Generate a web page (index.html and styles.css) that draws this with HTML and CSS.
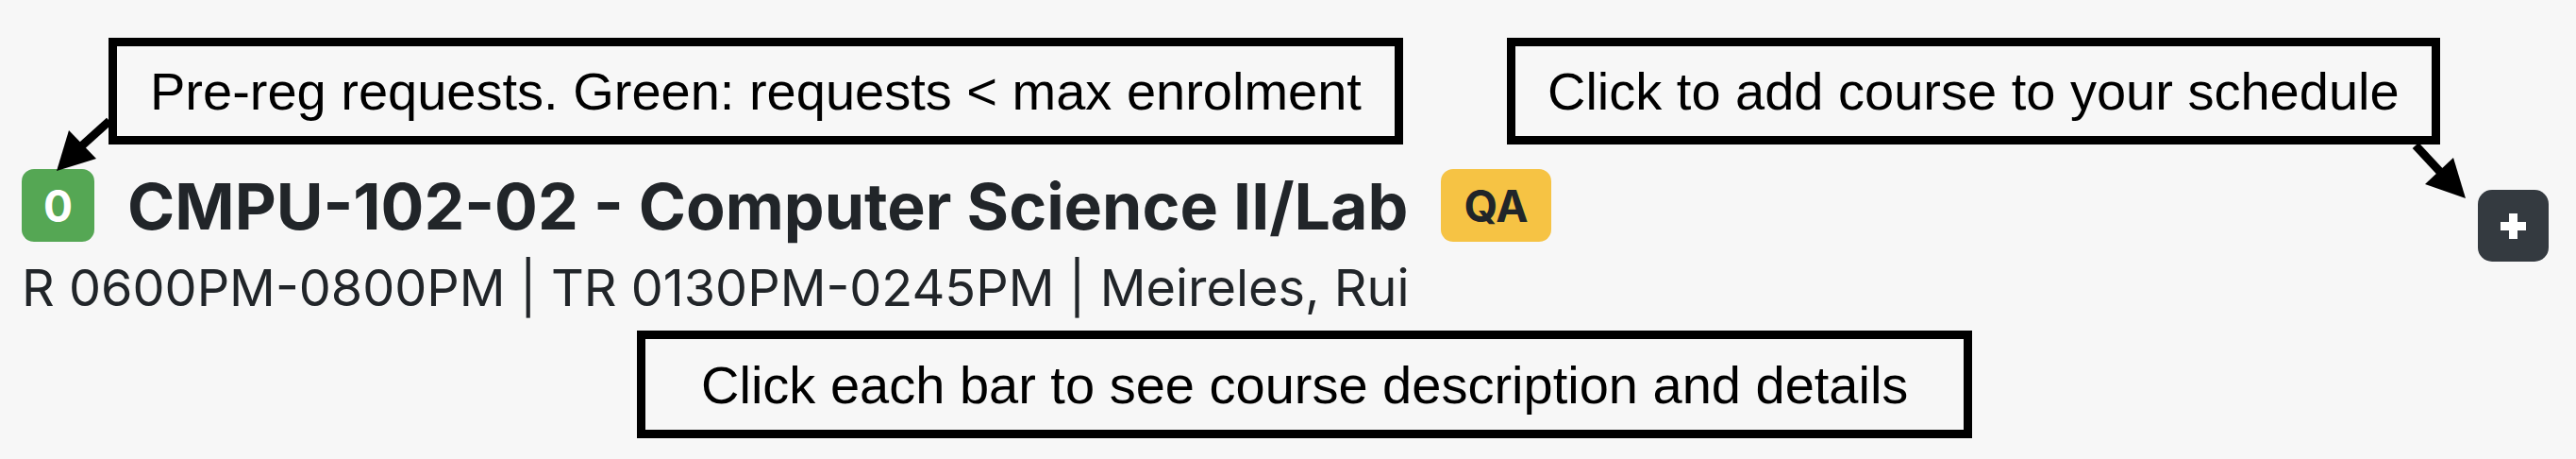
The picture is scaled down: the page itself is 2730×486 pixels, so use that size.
FILE: index.html
```html
<!DOCTYPE html>
<html lang="en">
<head>
<meta charset="utf-8">
<title>Course listing help</title>
<link rel="stylesheet" href="styles.css">
</head>
<body>
<div class="page">
  <div class="notes notes-top">
    <div class="note note-req">Pre-reg requests. Green: requests &lt; max enrolment</div>
    <div class="note note-add">Click to add course to your schedule</div>
  </div>

  <div class="course">
    <div class="course-info">
      <div class="course-title">
        <span class="badge badge-req">0</span>
        <h5 class="title">CMPU-102-02 - Computer Science II/Lab</h5>
        <span class="badge badge-qa">QA</span>
      </div>
      <div class="course-meta">R 0600PM-0800PM | TR 0130PM-0245PM | Meireles, Rui</div>
    </div>
    <button class="btn-add" type="button" aria-label="Add course">
      <svg class="icon-plus" viewBox="0 0 27 27" width="27" height="27"><path d="M9 0h9v9h9v9h-9v9H9v-9H0V9h9z" fill="#fff"/></svg>
    </button>
  </div>

  <div class="notes notes-bottom">
    <div class="note note-bar">Click each bar to see course description and details</div>
  </div>

  <svg class="arrows" viewBox="0 0 2730 486" width="2730" height="486">
    <line x1="116" y1="128" x2="86" y2="155" stroke="#000" stroke-width="9"/>
    <polygon points="60,181 102,168 73,138" fill="#000"/>
    <line x1="2560" y1="154" x2="2587" y2="183" stroke="#000" stroke-width="9"/>
    <polygon points="2613,210 2570,195 2600,167" fill="#000"/>
  </svg>
</div>
</body>
</html>
```

FILE: styles.css
```css
* { box-sizing: border-box; }

html, body {
  margin: 0;
  padding: 0;
  background: #f7f7f7;
}

.page {
  position: relative;
  width: 2730px;
  height: 486px;
  overflow: hidden;
}

.notes {
  display: flex;
}

.notes-top {
  padding-top: 40px;
  padding-left: 115px;
  gap: 110px;
}

.notes-bottom {
  padding-left: 675px;
  margin-top: 13px;
}

.note {
  border: 9px solid #000;
  font-family: "Liberation Sans", Arial, sans-serif;
  font-size: 56px;
  line-height: 64px;
  color: #000;
  white-space: nowrap;
  padding-top: 16px;
  padding-bottom: 15px;
}

.note-req { padding-left: 35px; padding-right: 35px; }
.note-add { padding-left: 34px; padding-right: 34px; }
.note-bar { padding-left: 59px; padding-right: 59px; padding-top: 17px; }

.course {
  display: flex;
  justify-content: space-between;
  align-items: flex-start;
  margin-top: 26px;
  padding-left: 23px;
  padding-right: 29px;
  font-family: Inter, "Noto Sans", sans-serif;
  color: #212529;
}

.course-title {
  display: flex;
  align-items: center;
  gap: 35px;
  height: 77px;
}

.title {
  margin: 0;
  font-size: 68px;
  font-weight: 700;
  line-height: 1;
  white-space: nowrap;
}

.badge {
  display: inline-flex;
  align-items: center;
  justify-content: center;
  height: 77px;
  padding: 0 24px;
  border-radius: 13px;
  font-size: 46px;
  font-weight: 700;
  line-height: 1;
}

.badge-req {
  width: 77px;
  padding: 0;
  background: #55a754;
  color: #fff;
}

.badge-qa {
  background: #f6c344;
  color: #212529;
}

.course-meta {
  margin-top: 17px;
  font-size: 54px;
  line-height: 64px;
  white-space: nowrap;
}

.btn-add {
  display: flex;
  align-items: center;
  justify-content: center;
  width: 75px;
  height: 76px;
  margin-top: 22px;
  padding: 0;
  border: 0;
  border-radius: 15px;
  background: #343a40;
}

.icon-plus { display: block; }

.arrows {
  position: absolute;
  left: 0;
  top: 0;
  pointer-events: none;
}
```
